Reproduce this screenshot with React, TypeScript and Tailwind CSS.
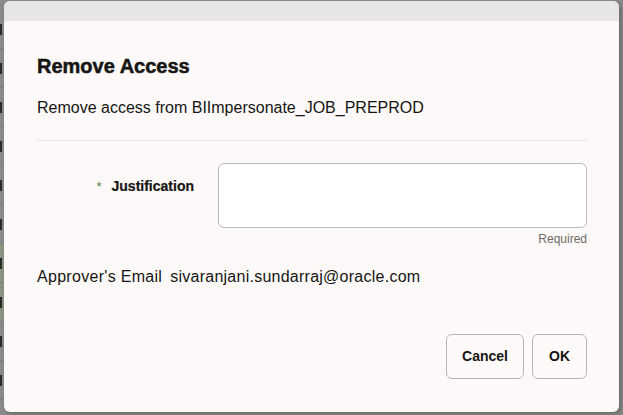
import React from "react";

// the page behind the modal only shows as a thin strip at the left edge
const rows = [0, 1, 2, 3, 4, 5, 6, 7, 8, 9];

function BackdropStrip() {
  return (
    <div className="w-[4px] shrink-0 overflow-hidden flex flex-col pt-[10px]">
      {rows.map((i) => (
        <div
          key={i}
          className={`h-[39px] border-b border-[#7d7d7d] flex items-center ${
            i === 6 || i === 7 ? "bg-[#8b9380]" : ""
          }`}
        >
          <div className="w-[2px] h-[11px] bg-[#2a2a2a]" />
        </div>
      ))}
    </div>
  );
}

export default function App() {
  return (
    <div
      className="w-[623px] h-[415px] flex bg-[#8a8a8a] overflow-hidden text-[#161513]"
      style={{ fontFamily: '"Liberation Sans", Arial, sans-serif' }}
    >
      <BackdropStrip />
      <div className="pt-[1px]">
        <div className="w-[615px] h-[411px] rounded-[6px] bg-[#fcf9f8] overflow-hidden flex flex-col shadow-[2px_2px_4px_rgba(0,0,0,0.25)]">
          <div className="h-[20px] shrink-0 bg-[#e8e6e4]" />

          <div className="flex flex-col px-[33px] pr-[32px]">
            <h1 className="mt-[33px] text-[20px] leading-[24px] font-bold [-webkit-text-stroke:0.5px_#161513]">
              Remove Access
            </h1>
            <p className="mt-[18px] text-[16px] leading-[24px]">
              Remove access from BIImpersonate_JOB_PREPROD
            </p>
            <div className="mt-[20px] h-px bg-[#e6e3e1]" />

            <div className="mt-[22px] flex items-start gap-[24px]">
              <div className="w-[157px] pt-[13px] flex justify-end items-baseline text-[14px] leading-[20px]">
                <span className="text-[#5b7f4a] text-[13px] mr-[10px]">*</span>
                <span className="font-bold [-webkit-text-stroke:0.2px_#161513]">Justification</span>
              </div>
              <div className="flex-1 flex flex-col items-end">
                <textarea className="w-full h-[65px] rounded-[6px] border border-[#bdbab6] bg-white resize-none outline-none" />
                <span className="mt-[3px] text-[12px] leading-[16px] text-[#6f6c68]">
                  Required
                </span>
              </div>
            </div>

            <div className="mt-[18px] flex gap-[8px] text-[16px] leading-[24px]">
              <span className="tracking-[0.3px]">Approver's Email</span>
              <span className="tracking-[0.25px]">sivaranjani.sundarraj@oracle.com</span>
            </div>

            <div className="mt-[45px] flex justify-end gap-[8px]">
              <button
                type="button"
                className="w-[78px] h-[45px] rounded-[6px] border border-[#b9b6b2] text-[14px] font-bold"
              >
                Cancel
              </button>
              <button
                type="button"
                className="w-[55px] h-[45px] rounded-[6px] border border-[#b9b6b2] text-[14px] font-bold"
              >
                OK
              </button>
            </div>
          </div>
        </div>
      </div>
    </div>
  );
}
